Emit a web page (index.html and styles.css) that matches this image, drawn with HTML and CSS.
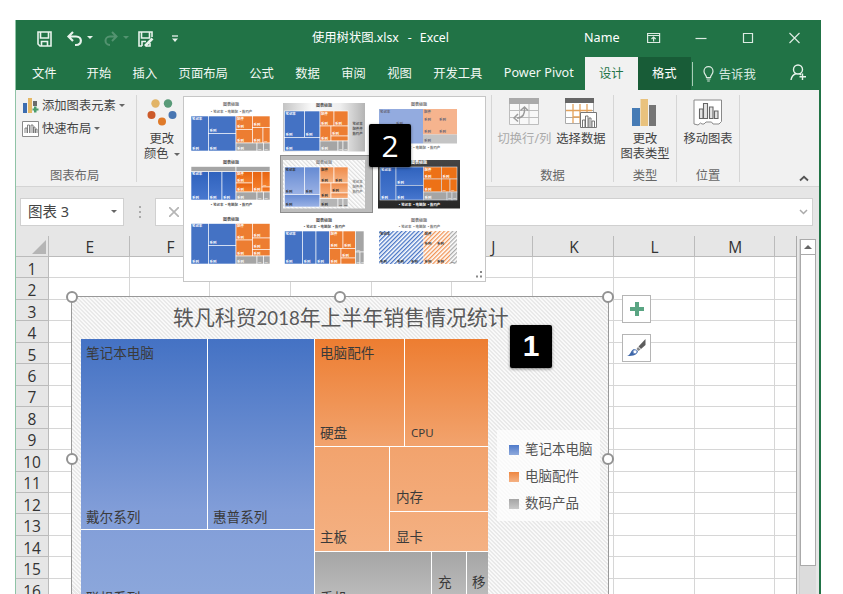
FILE: index.html
```html
<!DOCTYPE html>
<html lang="zh-CN">
<head>
    <meta charset="UTF-8">
    <meta name="viewport" content="width=device-width, initial-scale=1.0">
    <title>使用树状图.xlsx - Excel</title>
    <link rel="stylesheet" href="styles.css">
</head>
<body>
<div class="window">
    <div class="titlebar">
        <div class="quick">
            <svg width="150" height="20" viewBox="0 0 150 20" fill="none" stroke="#e8f3ec" stroke-width="1.6">
                <path d="M1 3H14V17H3L1 15Z M3.500 3V9H11.500V3 M4.500 17V12.500H10.500V17"/>
                <path d="M36 3L31.500 7.500L36 12 M32 7.500H39C45.500 7.500 45.500 16 39 16H38" stroke-width="2.200"/>
                <path d="M50 7H56L53 10Z" fill="#e8f3ec" stroke="none"/>
                <g opacity=".25"><path d="M75 3L79.500 7.500L75 12 M79 7.500H73C67 7.500 67 16 73 16" stroke-width="2"/><path d="M86 7H92L89 10Z" fill="#e8f3ec" stroke="none"/></g>
                <path d="M115 8V3H102V17H105 M104.500 3V9H112.500V3 M105 17V12.500H109"/><path d="M108 17L115.500 9.500" stroke-width="2.600"/><path d="M113 14V17H109"/>
                <path d="M135 7H141" stroke-width="1.300"/><path d="M135 9.500H141L138 13Z" fill="#e8f3ec" stroke="none"/>
            </svg>
        </div>
        <div class="doc-title">使用树状图.xlsx<span>-</span>Excel</div>
        <div class="user">Name</div>
        <svg class="controls" width="160" height="16" viewBox="0 0 160 16" fill="none" stroke="#dcebe2" stroke-width="1.200">
            <path d="M.6 3.500H12.600V12.500H.6Z M.6 5.500H12.600 M6.600 11.500V7.500 M4.500 9L6.600 7L8.700 9"/>
            <path d="M48.500 8.500H59.500"/>
            <path d="M96.500 3.500H105.500V12.500H96.500Z"/>
            <path d="M142.500 3L152.500 13 M152.500 3L142.500 13"/>
        </svg>
    </div>
    <div class="tabs">
        <span class="tab file">文件</span>
        <span class="tab">开始</span>
        <span class="tab">插入</span>
        <span class="tab">页面布局</span>
        <span class="tab">公式</span>
        <span class="tab">数据</span>
        <span class="tab">审阅</span>
        <span class="tab">视图</span>
        <span class="tab">开发工具</span>
        <span class="tab pivot">Power Pivot</span>
        <span class="tab design">设计</span>
        <span class="tab format">格式</span>
        <span class="tell">
            <svg width="11" height="16" viewBox="0 0 11 16" fill="none" stroke="#dcebe2" stroke-width="1.200"><path d="M3.500 11.500C3.500 9 1 8.500 1 5.200A4.500 4.500 0 0 1 10 5.200C10 8.500 7.500 9 7.500 11.500Z M3.500 13H7.500 M4.200 15H6.800"/></svg>
            告诉我
        </span>
        <svg class="share" width="17" height="17" viewBox="0 0 17 17" fill="none" stroke="#e8f3ec" stroke-width="1.400"><circle cx="8" cy="5.500" r="4.500"/><path d="M1 16C1.500 12.500 3.500 10.500 6 9.500 M9.500 9.500L11 11 M12.500 9.500V16 M9.500 12.800H16"/></svg>
    </div>

    <div class="ribbon">
        <div class="group layout">
            <div class="line">
                <svg width="18" height="17" viewBox="0 0 18 17"><path fill="#3c6db0" d="M1 6H5V16H1Z"/><path fill="#e5b866" d="M6 1H10V16H6Z"/><path fill="#6b6b6b" d="M11 4H15V9H11Z"/><path fill="#4a9c6a" d="M12 9.500H14.500V11.500H16.500V13.500H14.500V15.500H12V13.500H10.500V11.500H12Z"/></svg>
                <span>添加图表元素</span><i class="caret"></i>
            </div>
            <div class="line">
                <svg width="18" height="16" viewBox="0 0 18 16" fill="#fff" stroke="#8a8a8a"><path d="M.5 .5H16.500V15.500H.5Z"/><path stroke="#666" stroke-width=".8" fill="none" d="M3 12V7H5V12M5.500 12V4H7.500V12M9 12V4H11V12M11.500 12V6H13V12M13.500 12V8H15V12"/></svg>
                <span>快速布局</span><i class="caret"></i>
            </div>
            <div class="label">图表布局</div>
        </div>
        <div class="group colors">
            <div class="tool">
                <svg width="30" height="28" viewBox="0 0 30 28"><circle cx="8.500" cy="4.500" r="4.200" fill="#e2b466"/><circle cx="21" cy="4.500" r="4.200" fill="#589a78"/><circle cx="4.500" cy="16" r="4" fill="#cc5a2a"/><circle cx="25.500" cy="16" r="4" fill="#4876b2"/><circle cx="15" cy="22.500" r="4" fill="#df7a29"/></svg>
                <span>更改</span><span>颜色<i class="caret"></i></span>
            </div>
        </div>
        <div class="group data">
            <div class="tools">
                <div class="tool off">
                    <svg width="31" height="28" viewBox="0 0 31 28" fill="none" stroke="#bdbdbd"><path fill="#f8f8f8" d="M.5 .5H29.500V26.500H.5Z M.5 12.500H29.500 M.5 19.500H29.500 M10.500 6V26 M20 6V26"/><path fill="#aaa" stroke="none" d="M0 0H30V6H0Z"/><path stroke="#9b9b9b" stroke-width="1.500" d="M8 20C14 20 16 16 15.500 10 M9 16L5 20L9 23.500 M11.500 12.500L15.500 9L19 12.500"/></svg>
                    <span>切换行/列</span>
                </div>
                <div class="tool">
                    <svg width="32" height="31" viewBox="0 0 32 31" fill="none"><path fill="#fff" stroke="#aaa" d="M.5 .5H28.500V25.500H.5Z M.5 19.500H28.500 M.5 12.500H28"/><path stroke="#e3a25c" stroke-width="1.300" d="M1 12.500H27M8 6V25M15 6V25M22 6V18M8 19H20"/><path fill="#666" d="M0 0H29V5H0Z"/><path fill="#fff" stroke="#777" d="M15.500 14.500H31.500V29.500H15.500Z"/><path stroke="#666" stroke-width=".9" d="M17.500 29V22H20V29M20.500 29V18H23V29M24 29V20H26V29M27 29V23H29.500V29"/></svg>
                    <span>选择数据</span>
                </div>
            </div>
            <div class="label">数据</div>
        </div>
        <div class="group type">
            <div class="tool">
                <svg width="25" height="28" viewBox="0 0 25 28"><path fill="#467bb5" d="M0 9H8V27H0Z"/><path fill="#e9c27d" d="M8.500 0H16V27H8.500Z"/><path fill="#757575" d="M17 6H24V27H17Z"/></svg>
                <span>更改</span><span>图表类型</span>
            </div>
            <div class="label">类型</div>
        </div>
        <div class="group place">
            <div class="tool">
                <svg width="30" height="28" viewBox="0 0 30 28" fill="none" stroke="#8a8a8a"><path fill="#fff" d="M1 1H28.500V22.500L26 25H20L18.500 23H13L11 25H9L7.500 24L5 26L1 25Z"/><path stroke="#666" stroke-width="1.100" fill="#e4e4e4" d="M6.500 10H10V19.500H6.500ZM10.500 4.500H14.500V19.500H10.500ZM16.500 8H20V19.500H16.500ZM21.500 12H25V19.500H21.500Z"/></svg>
                <span>移动图表</span>
            </div>
            <div class="label">位置</div>
        </div>
        <svg class="collapse" width="10" height="7" viewBox="0 0 10 7" fill="none" stroke="#555" stroke-width="1.800"><path d="M1 5.500L5 1.800L9 5.500"/></svg>
    </div>

    <div class="formula-bar">
        <div class="name-box"><span>图表 3</span><i class="caret"></i></div>
        <div class="dots"><i></i><i></i><i></i></div>
        <div class="formula">
            <svg width="10" height="10" viewBox="0 0 10 10" stroke="#b5b5b5" stroke-width="1.700"><path d="M0 0L10 10M10 0L0 10"/></svg>
            <svg width="9" height="6" viewBox="0 0 9 6" fill="none" stroke="#aaa" stroke-width="1.500"><path d="M1 1L4.500 4.500L8 1"/></svg>
        </div>
    </div>

    <div class="workspace">
        <div class="sheet" id="sheet"></div>
        <div class="scrollbar">
            <div class="up"><i></i></div>
            <div class="thumb"></div>
        </div>
    </div>

    <div class="chart">
        <div class="chart-title">轶凡科贸<b>2018</b>年上半年销售情况统计</div>
        <div class="chart-body">
            <div class="treemap">
                <div class="series blue">
                    <div class="tile"><span>笔记本电脑</span><span>戴尔系列</span></div>
                    <div class="tile"><span></span><span>惠普系列</span></div>
                    <div class="tile wide"><span></span><span>联想系列</span></div>
                </div>
                <div class="right">
                    <div class="series orange">
                        <div class="pair top">
                            <div class="tile"><span>电脑配件</span><span>硬盘</span></div>
                            <div class="tile"><span></span><span class="latin">CPU</span></div>
                        </div>
                        <div class="pair bottom">
                            <div class="tile"><span></span><span>主板</span></div>
                            <div class="stack">
                                <div class="tile"><span></span><span>内存</span></div>
                                <div class="tile"><span></span><span>显卡</span></div>
                            </div>
                        </div>
                    </div>
                    <div class="series gray">
                        <div class="tile"><span>手机</span></div>
                        <div class="tile"><span>充</span></div>
                        <div class="tile"><span>移</span></div>
                    </div>
                </div>
            </div>
            <div class="legend">
                <div><i class="blue"></i>笔记本电脑</div>
                <div><i class="orange"></i>电脑配件</div>
                <div><i class="gray"></i>数码产品</div>
            </div>
        </div>
        <i class="handle tl"></i><i class="handle tc"></i><i class="handle tr"></i>
        <i class="handle ml"></i><i class="handle mr"></i>
    </div>

    <div class="chart-buttons">
        <div><svg width="16" height="16" viewBox="0 0 16 16"><path fill="#5aa583" d="M6 1H10V6H15V10H10V15H6V10H1V6H6Z"/></svg></div>
        <div><svg width="19" height="18" viewBox="0 0 19 18"><path fill="#5c5c5c" d="M18.500 0V6L14 10L11.500 7.500Z"/><path fill="#888" d="M11 8L13.500 10.500L11.500 12L9.500 10Z"/><path fill="#3d66a8" d="M0 17C4 16 3 12 7 10L11 12C10 16 7 17 0 17Z"/><circle cx="8" cy="12.800" r="2" fill="#fff" stroke="#6f8fc4"/></svg></div>
    </div>

    <div class="gallery">
        <div class="styles" id="styles"></div>
        <svg class="grip" width="8" height="8" viewBox="0 0 8 8" fill="#888"><path d="M5 0H7V2H5ZM5 4.500H7V6.500H5ZM1 4.500H3V6.500H1Z"/></svg>
    </div>

    <div class="badge two">2</div>
    <div class="badge one">1</div>
</div>
<script src="script.js"></script>
</body>
</html>
```
FILE: styles.css
```css
* {
    box-sizing: border-box;
}
body {
    margin: 0;
    height: 594px;
    overflow: hidden;
    background: #fff;
    font-family: "Noto Sans", "Noto Sans CJK SC", sans-serif;
    font-size: 12.3px;
    color: #444;
}
svg {
    display: block;
    flex: none;
}
.window {
    position: relative;
    width: 806px;
    height: 574px;
    margin: 20px 0 0 15px;
    border-left: 1px solid #8fc3a6;
    border-right: 2px solid #217346;
    overflow: hidden;
    display: flex;
    flex-direction: column;
    background: #e6e6e6;
}

/* title bar and tabs */
.titlebar {
    height: 37px;
    margin-left: -1px;
    flex: none;
    display: flex;
    align-items: center;
    background: #217346;
    color: #fff;
    white-space: nowrap;
}
.quick {
    width: 297px;
    padding: 1px 0 0 22px;
}
.doc-title {
    width: 272px;
    padding-bottom: 4px;
}
.doc-title span {
    margin: 0 8px 0 9px;
}
.user {
    width: 63px;
    font-size: 12.6px;
    padding-bottom: 2px;
}
.controls {
    margin-bottom: 2px;
}
.tabs {
    height: 33px;
    margin-left: -1px;
    flex: none;
    display: flex;
    align-items: center;
    background: #217346;
    color: #f2f8f4;
    white-space: nowrap;
    padding-left: 17px;
}
.tab {
    margin-right: 21.4px;
    padding-bottom: 2px;
}
.tab.file {
    margin-right: 30px;
}
.tab.pivot {
    width: 70px;
    margin-right: 11px;
    font-size: 12.6px;
}
.tab.design, .tab.format {
    width: 53px;
    height: 33px;
    line-height: 33px;
    margin: 0;
    padding: 0;
    text-align: center;
    background: #f1f1f1;
    color: #217346;
}
.tab.format {
    background: #185c37;
    color: #fff;
}
.tell {
    display: flex;
    align-items: center;
    gap: 5px;
    height: 24px;
    margin-left: 1px;
    padding-left: 10px;
    border-left: 1px solid #a8cdb8;
    color: #dcebe2;
}
.share {
    margin: 0 0 2px 34px;
}

/* ribbon */
.ribbon {
    height: 97px;
    flex: none;
    display: flex;
    align-items: flex-start;
    padding-top: 5px;
    background: #f1f1f1;
    border-bottom: 1px solid #d4d4d4;
    line-height: 15px;
    white-space: nowrap;
}
.group {
    height: 87px;
    display: flex;
    flex-direction: column;
    align-items: center;
    border-right: 1px solid #d6d6d6;
}
.layout {
    width: 121px;
    padding-left: 6px;
    align-items: flex-start;
}
.line {
    display: flex;
    align-items: center;
    height: 23px;
    margin-top: -1px;
    margin-bottom: 1px;
}
.line span {
    margin: 0 3px 0 2px;
}
.caret {
    display: inline-block;
    border: 3px solid transparent;
    border-top-color: #666;
    border-bottom: 0;
}
.label {
    margin-top: auto;
    margin-bottom: -1px;
    color: #666;
}
.layout .label {
    margin-left: 28px;
}
.colors {
    width: 355px;
    align-items: flex-start;
    padding-left: 7px;
}
.tool {
    display: flex;
    flex-direction: column;
    align-items: center;
    padding-top: 4px;
}
.tool svg {
    margin-bottom: 4px;
}
.tool .caret {
    margin-left: 5px;
    vertical-align: 2px;
}
.data {
    width: 122px;
}
.tools {
    display: flex;
    gap: 5px;
    padding-right: 2px;
}
.data .tool {
    height: 51px;
    padding-top: 3px;
}
.data .tool svg {
    margin-bottom: auto;
}
.off {
    color: #aaa;
}
.type {
    width: 63px;
}
.place {
    width: 63px;
}
.collapse {
    margin: 80px 0 0 59px;
}

/* formula bar */
.formula-bar {
    height: 49px;
    flex: none;
    display: flex;
    align-items: flex-start;
    padding: 11px 6px 0 4px;
}
.name-box {
    width: 104px;
    height: 28px;
    display: flex;
    align-items: center;
    justify-content: space-between;
    padding: 0 6px 2px 7px;
    border: 1px solid #d0d0d0;
    background: #fff;
    font-size: 14.5px;
}
.name-box span {
    margin-top: -2px;
}
.dots {
    width: 31px;
    height: 28px;
    display: flex;
    flex-direction: column;
    justify-content: center;
    align-items: center;
    gap: 3px;
}
.dots i {
    width: 2px;
    height: 2px;
    background: #aaa;
}
.formula {
    flex: 1;
    height: 28px;
    display: flex;
    align-items: center;
    justify-content: space-between;
    padding: 0 4px 0 13px;
    border: 1px solid #d0d0d0;
    background: #fff;
}

/* sheet */
.workspace {
    flex: 1;
    display: flex;
    align-items: flex-start;
}
.sheet {
    display: grid;
    grid-template-columns: 33px repeat(9, 80.7px) 21px;
    grid-template-rows: 21px repeat(16, 21.46px);
    width: 781px;
    height: 358px;
    overflow: hidden;
    border-right: 1px solid #aaa;
    font-family: "Open Sans", "Noto Sans", sans-serif;
    font-size: 15.5px;
    color: #333;
    background: #fff;
}
.sheet div {
    border-right: 1px solid #d6d6d6;
    border-bottom: 1px solid #d6d6d6;
}
.sheet .col, .sheet .row, .sheet .corner {
    display: flex;
    align-items: center;
    justify-content: center;
    background: #e6e6e6;
    border-right-color: #bbb;
    border-bottom-color: #bbb;
}
.sheet .col {
    padding: 2px 0 0 2px;
    line-height: 18px;
}
.sheet .row {
    padding-top: 4px;
    line-height: 17px;
}
.sheet .corner {
    align-items: flex-end;
    justify-content: flex-end;
    padding: 0 2px 2px 0;
}
.corner i {
    border-left: 14px solid transparent;
    border-bottom: 14px solid #b5b5b5;
}
.sheet .end {
    border-right: 0;
}
.scrollbar {
    width: 17px;
    height: 355px;
    margin: 3px 0 0 2px;
    background: #dcdcdc;
    border-left: 1px solid #d0d0d0;
}
.up {
    width: 16px;
    height: 16px;
    display: flex;
    align-items: center;
    justify-content: center;
    background: #fff;
    border: 1px solid #aaa;
}
.up i {
    border: 4px solid transparent;
    border-top: 0;
    border-bottom-color: #666;
}
.thumb {
    width: 16px;
    height: 311px;
    background: #fff;
    border: 1px solid #aaa;
    border-top: 0;
}

/* chart object floating over the cells */
.chart {
    position: absolute;
    left: 55px;
    top: 276px;
    width: 538px;
    height: 325px;
    border: 1px solid #999;
    background: repeating-linear-gradient(45deg, #f9f9f9 0, #f9f9f9 1.4px, #e9e9e9 1.4px, #e9e9e9 2.83px);
}
.chart-title {
    height: 42px;
    line-height: 40px;
    padding-left: 101px;
    font-size: 20.9px;
    color: #595959;
    white-space: nowrap;
}
.chart-title b {
    font-family: Lato, sans-serif;
    font-weight: normal;
    font-size: 18.6px;
}
.chart-body {
    display: flex;
    padding-left: 9px;
}
.treemap {
    display: flex;
    width: 407px;
    height: 285px;
    font-size: 13.6px;
    line-height: 16px;
    color: #3a3a3a;
}
.series.blue {
    width: 234px;
    display: grid;
    grid-template-columns: 127px 107px;
    grid-template-rows: 191px 94px;
    background: linear-gradient(#4472c4, #819dd8 60%, #8faadc);
}
.blue .wide {
    grid-column: span 2;
}
.tile {
    display: flex;
    flex-direction: column;
    justify-content: space-between;
    padding: 6px 0 4px 5px;
    border-right: 1px solid #fff;
    border-bottom: 1px solid #fff;
    white-space: nowrap;
}
.blue .wide {
    padding-bottom: 17px;
}
.right {
    width: 173px;
}
.series.orange {
    height: 213px;
    background: linear-gradient(#ed7d31, #f2a36d 50%, #f4b183);
}
.top {
    height: 108px;
    display: grid;
    grid-template-columns: 90px 83px;
}
.top .tile {
    padding-bottom: 5px;
}
.top .tile:last-child {
    border-right: 0;
    padding-left: 6px;
}
.latin {
    font-size: 11.5px;
}
.bottom {
    height: 105px;
    display: grid;
    grid-template-columns: 75px 98px;
}
.stack {
    display: grid;
    grid-template-rows: 65px 40px;
}
.stack .tile {
    border-right: 0;
    padding-left: 6px;
    padding-bottom: 6px;
}
.bottom > .tile {
    padding-bottom: 6px;
}
.series.gray {
    height: 72px;
    display: grid;
    grid-template-columns: 117px 35px 21px;
    background: linear-gradient(#a5a5a5, #c9c9c9);
}
.gray .tile {
    padding: 22px 0 0 6px;
}
.gray .tile:first-child {
    padding: 38px 0 0 5px;
}
.gray .tile:last-child {
    border-right: 0;
    padding-left: 5px;
}
.legend {
    width: 103px;
    height: 91px;
    margin: 91px 0 0 9px;
    padding: 6px 0 0 12px;
    background: rgba(255, 255, 255, .7);
    font-size: 13.5px;
    color: #555;
    line-height: 27px;
    white-space: nowrap;
}
.legend div {
    display: flex;
    align-items: center;
    gap: 6px;
}
.legend i {
    width: 10px;
    height: 10px;
}
.legend .blue {
    background: linear-gradient(#4f7aca, #8faadc);
}
.legend .orange {
    background: linear-gradient(#ee8741, #f4b183);
}
.legend .gray {
    background: linear-gradient(#a5a5a5, #c9c9c9);
}
.handle {
    position: absolute;
    width: 12px;
    height: 12px;
    border: 2px solid #929292;
    border-radius: 50%;
    background: #fff;
}
.tl, .tc, .tr {
    top: -6px;
}
.ml, .mr {
    top: 156px;
}
.tl, .ml {
    left: -6px;
}
.tc {
    left: 262px;
}
.tr, .mr {
    right: -6px;
}
.chart-buttons {
    position: absolute;
    left: 606px;
    top: 275px;
    display: flex;
    flex-direction: column;
    gap: 11px;
}
.chart-buttons div {
    width: 29px;
    height: 28px;
    display: flex;
    align-items: center;
    justify-content: center;
    background: #fff;
    border: 1px solid #b5b5b5;
}

/* chart style gallery */
.gallery {
    position: absolute;
    left: 167px;
    top: 76px;
    width: 303px;
    height: 186px;
    padding: 5px 0 0 6px;
    background: #fff;
    border: 1px solid #c6c6c6;
}
.styles {
    display: grid;
    grid-template-columns: 93px 95px 83px;
    grid-template-rows: 57px 57px 50px;
}
.styles svg {
    overflow: visible;
}
.styles text {
    font-size: 4px;
    font-weight: bold;
}
.styles .cap {
    font-size: 3.4px;
    fill: #fff;
}
.grip {
    position: absolute;
    right: 2px;
    bottom: 2px;
}
.badge {
    position: absolute;
    width: 42px;
    height: 43px;
    line-height: 43px;
    border-radius: 2px;
    background: #000;
    color: #fff;
    font-family: "Open Sans", sans-serif;
    font-size: 30px;
    text-align: center;
    box-shadow: 0 1px 3px rgba(0, 0, 0, .5);
}
.two {
    left: 353px;
    top: 104px;
    font-weight: 500;
}
.one {
    left: 494px;
    top: 305px;
    line-height: 41px;
    font-family: "Liberation Sans", sans-serif;
    font-weight: bold;
}
```
FILE: script.js
```javascript
// cells
const sheet = document.getElementById('sheet');
let cells = '<div class="corner"><i></i></div>';
// G, H and I sit behind the open gallery
['E', 'F', '', '', '', 'J', 'K', 'L', 'M'].forEach(c => { cells += `<div class="col">${c}</div>`; });
cells += '<div class="col end"></div>';
for (let r = 1; r <= 16; r++) {
    cells += `<div class="row">${r}</div>` + '<div></div>'.repeat(9) + '<div class="end"></div>';
}
sheet.innerHTML = cells;

// each tile is [x1, y1, x2, y2] inside an 83x50 preview
const base = { b: '#4472c4', o: '#ed7d31', g: '#a5a5a5', line: '#fff', cap: '#fff', text: '#555' };
const previews = [
    { title: 4, legend: [41, 10], text: '#777',
      b: [[1, 14, 18.5, 49], [18.5, 14, 46, 31.5], [18.5, 31.5, 46, 49]],
      o: [[46, 14, 62.5, 27.5], [46, 27.5, 62.5, 41], [62.5, 14, 80, 25.5], [62.5, 25.5, 73, 41], [73, 25.5, 80, 41]],
      g: [[46, 41, 67, 49], [67, 41, 73.5, 49], [73.5, 41, 80, 49]] },
    { title: 5, side: [74.5, 26], bg: 'url(#silver)',
      b: [[1.5, 9, 21.5, 35.5], [21.5, 9, 37, 35.5], [1.5, 35.5, 37, 49]],
      o: [[37, 9, 51, 24], [51, 9, 65, 24], [37, 24, 48, 39], [48, 24, 65, 34], [48, 34, 65, 39]],
      g: [[37, 39, 55, 49], [55, 39, 60, 49], [60, 39, 65, 49]] },
    { title: 4, legend: [41, 46], b1: '#93abdf', o1: '#f6b48e', g1: '#c4c4c4', line: 'none', cap: '#667', text: '#777',
      b: [[1, 7, 17, 41.5], [17, 7, 45, 24], [17, 24, 45, 41.5]],
      o: [[45, 7, 60, 20], [60, 7, 79, 20], [45, 20, 60, 32.5], [60, 20, 79, 32.5]],
      g: [[45, 32.5, 79, 41.5]] },
    { title: 5, legend: [41, 46], b1: 'url(#blueGrad)', o1: 'url(#orangeGrad)',
      b: [[1, 12.5, 18.5, 41], [18.5, 12.5, 32, 41], [32, 12.5, 46, 41]],
      o: [[46, 12.5, 62.5, 24], [46, 24, 62.5, 33], [62.5, 12.5, 72, 33], [72, 12.5, 80, 28], [72, 28, 80, 33]],
      g: [[1, 7.5, 46, 12.5], [46, 7.5, 80, 12.5], [46, 33, 67, 41], [67, 33, 73.5, 41], [73.5, 33, 80, 41]] },
    { title: 5, side: [74.5, 27], bg: 'url(#hatch)', selected: true, b1: 'url(#blueSoft)', o1: 'url(#orangeSoft)', g1: '#b5b5b5', cap: '#333', text: '#888',
      b: [[1.5, 8, 21.5, 35.5], [21.5, 8, 37, 35.5], [1.5, 35.5, 37, 48]],
      o: [[37, 8, 51, 24], [51, 8, 65, 24], [37, 24, 48, 39.5], [48, 24, 65, 34], [48, 34, 65, 39.5]],
      g: [[37, 39.5, 55, 48], [55, 39.5, 60, 48], [60, 39.5, 65, 48]] },
    { title: 5, legend: [41, 46], bg: 'url(#dark)', text: '#fff', line: '#dde3ee', b1: 'url(#blueGrad)', o1: '#ed7116',
      b: [[2, 8, 18, 41], [18, 8, 45.5, 26.5], [18, 26.5, 45.5, 41]],
      o: [[45.5, 8, 63.5, 20], [45.5, 20, 63.5, 33], [63.5, 8, 79, 20], [63.5, 20, 72, 33], [72, 20, 79, 33]],
      g: [[45.5, 33, 69, 41], [69, 33, 74, 41], [74, 33, 79, 41]] },
    { title: 5,
      b: [[1, 7.5, 18.5, 48], [18.5, 7.5, 46, 29.5], [18.5, 29.5, 46, 48]],
      o: [[46, 7.5, 62.5, 24], [46, 24, 62.5, 40], [62.5, 7.5, 80, 22], [62.5, 22, 80, 33.5], [62.5, 33.5, 80, 40]],
      g: [[46, 40, 67, 48], [67, 40, 73.5, 48], [73.5, 40, 80, 48]] },
    { title: 6, legend: [41, 11],
      b: [[1.5, 15, 19.5, 48], [19.5, 15, 33, 48], [33, 15, 46.5, 48]],
      o: [[46.5, 15, 60, 32.5], [60, 15, 72.5, 32.5], [46.5, 32.5, 58, 48], [58, 32.5, 72.5, 42], [58, 42, 72.5, 48]],
      g: [[72.5, 15, 81, 36], [72.5, 36, 77, 48], [77, 36, 81, 48]] },
    { title: 6, legend: [41, 11], b1: 'url(#blueHatch)', o1: 'url(#orangeHatch)', g1: 'url(#grayHatch)', line: 'none', cap: '#333', text: '#777',
      b: [[1, 15, 18, 48], [18, 15, 32, 48], [32, 15, 45.5, 48]],
      o: [[45.5, 15, 58, 30], [58, 15, 72, 30], [45.5, 30, 58, 48], [58, 30, 72, 48]],
      g: [[72, 15, 79, 48]] }
];

const hatch = (id, color, back, angle) => `<pattern id="${id}" width="3" height="3" patternUnits="userSpaceOnUse" patternTransform="rotate(${angle})"><rect width="3" height="3" fill="${back}"/><rect width="1.3" height="3" fill="${color}"/></pattern>`;
const grad = (id, a, b) => `<linearGradient id="${id}" x2="0" y2="1"><stop stop-color="${a}"/><stop offset="1" stop-color="${b}"/></linearGradient>`;
const defs = '<defs>' + grad('blueGrad', '#2f62bd', '#4878cf') + grad('orangeGrad', '#e86410', '#f5822f') +
    grad('blueSoft', '#6489d2', '#9bb2e5') + grad('orangeSoft', '#ef8a48', '#f6b586') + grad('dark', '#444', '#262626') +
    '<linearGradient id="silver"><stop stop-color="#c4c4c4"/><stop offset=".35" stop-color="#fafafa"/><stop offset=".7" stop-color="#eee"/><stop offset="1" stop-color="#b4b4b4"/></linearGradient>' +
    hatch('hatch', '#dedede', '#fff', -45) + hatch('blueHatch', '#4472c4', '#fff', 45) +
    hatch('orangeHatch', '#f09355', '#fff', 45) + hatch('grayHatch', '#aaa', '#fff', 45) + '</defs>';

function draw(preview, index) {
    const p = Object.assign({}, base, preview);
    const fills = { b: p.b1 || base.b, o: p.o1 || base.o, g: p.g1 || base.g };
    let out = index === 0 ? defs : '';
    if (p.selected) out += '<rect x="-2.5" y="-3.5" width="92" height="57" fill="#bcbcbc" stroke="#8e8e8e"/>';
    if (p.bg) out += `<rect x="0" y="1" width="82" height="48.5" fill="${p.bg}"/>`;
    ['b', 'o', 'g'].forEach(key => {
        preview[key].forEach(([x1, y1, x2, y2]) => {
            out += `<rect x="${x1}" y="${y1}" width="${x2 - x1}" height="${y2 - y1}" fill="${fills[key]}" stroke="${p.line}" stroke-width=".6"/>`;
            if (y2 - y1 > 6) out += `<text class="cap" x="${x1 + 1}" y="${y2 - 1.3}" style="fill:${p.cap}">${x2 - x1 > 9 ? '系列' : '—'}</text>`;
        });
        const [x, y] = preview[key][0];
        if (key !== 'g') out += `<text class="cap" x="${x + 1}" y="${y + 3.8}" style="fill:${p.cap}">${key === 'b' ? '笔记本' : '配件'}</text>`;
    });
    out += `<text x="41" y="${p.title}" text-anchor="middle" fill="${p.text}">图表标题</text>`;
    if (p.legend) out += `<text x="${p.legend[0]}" y="${p.legend[1] + 1.2}" text-anchor="middle" fill="${p.text}" style="font-size:3.4px">▪笔记本 ▪电脑配 ▪数码产</text>`;
    if (p.side) ['笔记本', '配件件', '数码产'].forEach((t, i) => {
        out += `<text x="${p.side[0]}" y="${p.side[1] - 3 + i * 5}" text-anchor="middle" fill="${p.text}" style="font-size:3.4px">${t}</text>`;
    });
    return `<svg width="83" height="50" viewBox="0 0 83 50">${out}</svg>`;
}
document.getElementById('styles').innerHTML = previews.map(draw).join('');
```
